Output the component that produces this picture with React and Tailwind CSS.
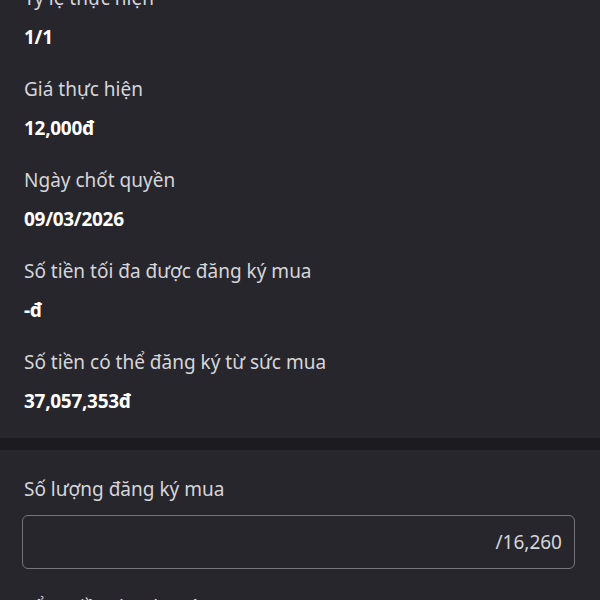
import React from "react";

const details = [
  { label: "Tỷ lệ thực hiện", value: "1/1" },
  { label: "Giá thực hiện", value: "12,000đ" },
  { label: "Ngày chốt quyền", value: "09/03/2026" },
  { label: "Số tiền tối đa được đăng ký mua", value: "-đ" },
  { label: "Số tiền có thể đăng ký từ sức mua", value: "37,057,353đ" },
];

const App = () => {
  return (
    <div
      className="h-[600px] w-[600px] overflow-hidden bg-[#27262c]"
      style={{ fontFamily: '"Noto Sans", "Open Sans", sans-serif' }}
    >
      {/* Thông tin quyền mua */}
      <div className="-mt-[16px] flex flex-col gap-[24px] px-6 pb-[23px]">
        {details.map((item) => (
          <div key={item.label} className="flex flex-col">
            <span className="text-[19px] leading-[28px] text-[#d6d6da]">
              {item.label}
            </span>
            <span className="mt-[11px] text-[19px] font-bold leading-[28px] tracking-[-0.3px] text-white">
              {item.value}
            </span>
          </div>
        ))}
      </div>

      <div className="h-[12px] bg-[#1c1b20]" />

      {/* Đăng ký mua */}
      <div className="flex flex-col px-6 pt-[25px]">
        <span className="text-[19px] leading-[28px] text-[#d6d6da]">
          Số lượng đăng ký mua
        </span>
        <div className="-ml-[2px] mr-[1px] mt-[12px] flex h-[54px] items-center justify-end rounded-[6px] border-[1.5px] border-[#75757a] px-[12px]">
          <span className="text-[19px] text-[#d6d6da]">/16,260</span>
        </div>
        <span className="mt-[24px] text-[19px] leading-[28px] text-[#d6d6da]">
          Tổng tiền thanh toán
        </span>
      </div>
    </div>
  );
};

export default App;
